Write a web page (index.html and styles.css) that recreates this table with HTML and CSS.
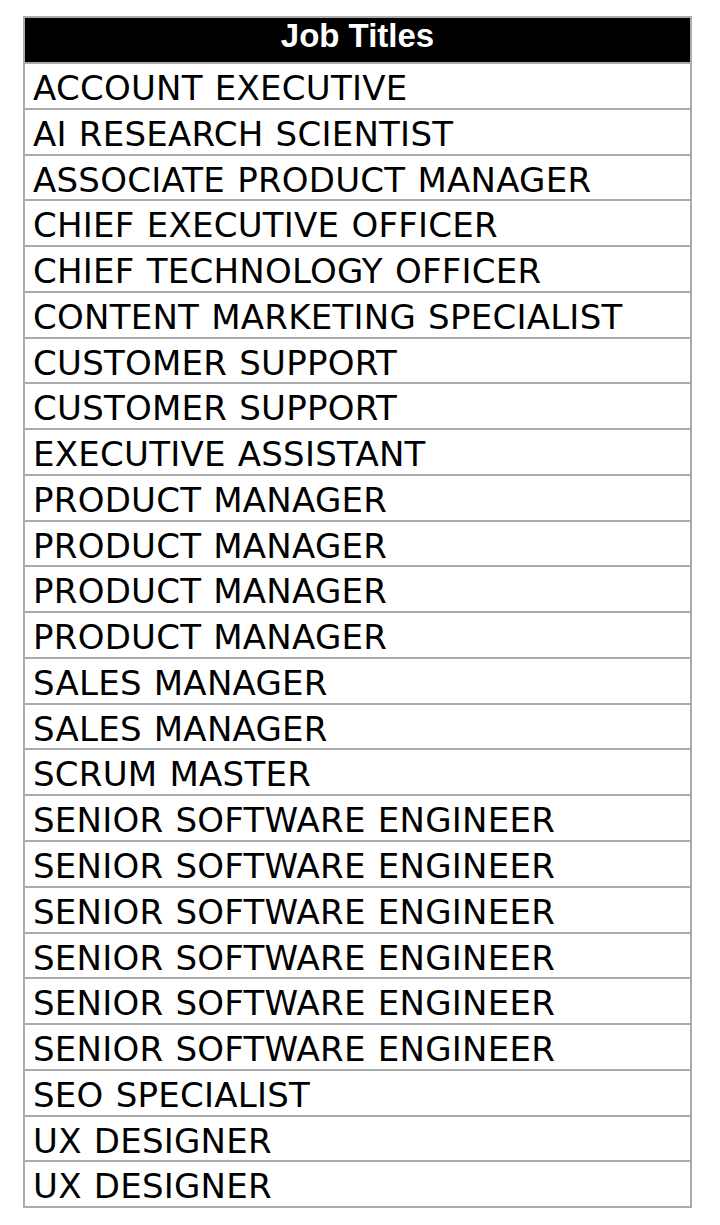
FILE: index.html
```html
<!DOCTYPE html>
<html lang="en">
<head>
<meta charset="utf-8">
<title>Job Titles</title>
<link rel="stylesheet" href="styles.css">
</head>
<body>
<div class="table">
  <div class="head">Job Titles</div>
  <div class="row">ACCOUNT EXECUTIVE</div>
  <div class="row">AI RESEARCH SCIENTIST</div>
  <div class="row">ASSOCIATE PRODUCT MANAGER</div>
  <div class="row">CHIEF EXECUTIVE OFFICER</div>
  <div class="row">CHIEF TECHNOLOGY OFFICER</div>
  <div class="row">CONTENT MARKETING SPECIALIST</div>
  <div class="row">CUSTOMER SUPPORT</div>
  <div class="row">CUSTOMER SUPPORT</div>
  <div class="row">EXECUTIVE ASSISTANT</div>
  <div class="row">PRODUCT MANAGER</div>
  <div class="row">PRODUCT MANAGER</div>
  <div class="row">PRODUCT MANAGER</div>
  <div class="row">PRODUCT MANAGER</div>
  <div class="row">SALES MANAGER</div>
  <div class="row">SALES MANAGER</div>
  <div class="row">SCRUM MASTER</div>
  <div class="row">SENIOR SOFTWARE ENGINEER</div>
  <div class="row">SENIOR SOFTWARE ENGINEER</div>
  <div class="row">SENIOR SOFTWARE ENGINEER</div>
  <div class="row">SENIOR SOFTWARE ENGINEER</div>
  <div class="row">SENIOR SOFTWARE ENGINEER</div>
  <div class="row">SENIOR SOFTWARE ENGINEER</div>
  <div class="row">SEO SPECIALIST</div>
  <div class="row">UX DESIGNER</div>
  <div class="row">UX DESIGNER</div>
</div>
</body>
</html>
```
FILE: styles.css
```css
html, body {
  margin: 0;
  padding: 0;
  background: #ffffff;
}
.table {
  box-sizing: border-box;
  width: 669px;
  margin: 16px 0 0 23px;
  border: 2px solid #ababab;
  display: flex;
  flex-direction: column;
}
.head {
  height: 44px;
  background: #000000;
  color: #ffffff;
  font-family: "Liberation Sans", Arial, sans-serif;
  font-weight: bold;
  font-size: 33px;
  line-height: 35px;
  text-align: center;
}
.row {
  height: 41.78px;
  border-top: 2px solid #ababab;
  padding: 2px 0 0 8px;
  font-family: "DejaVu Sans", Verdana, sans-serif;
  font-size: 34px;
  line-height: 44px;
  letter-spacing: 0.25px;
  word-spacing: 1px;
  color: #000000;
  white-space: nowrap;
  overflow: hidden;
}
```
